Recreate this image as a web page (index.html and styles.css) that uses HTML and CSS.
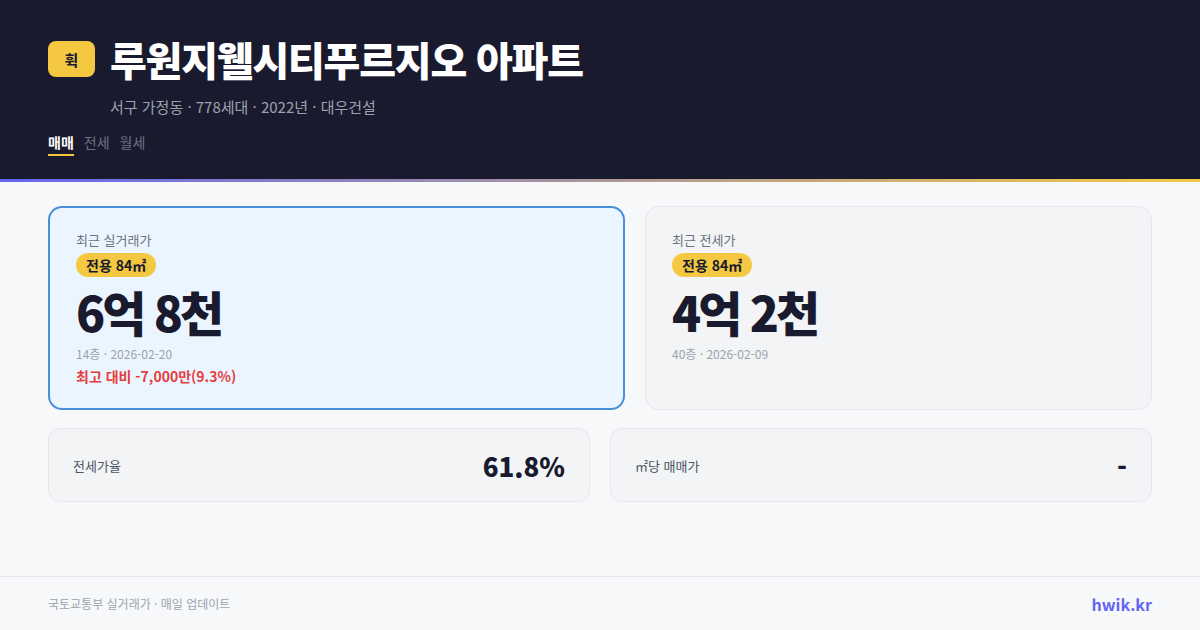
FILE: index.html
```html
<!DOCTYPE html>
<html lang="ko">
<head>
<meta charset="utf-8">
<link rel="stylesheet" href="styles.css">
</head>
<body>
<div class="page">
  <header class="header">
    <div class="title-row">
      <div class="logo">휙</div>
      <h1 class="title">루원지웰시티푸르지오 아파트</h1>
    </div>
    <div class="subtitle">서구 가정동 · 778세대 · 2022년 · 대우건설</div>
    <nav class="tabs">
      <span class="tab active">매매</span>
      <span class="tab">전세</span>
      <span class="tab">월세</span>
    </nav>
  </header>
  <div class="accent"></div>
  <main class="main">
    <div class="top-cards">
      <section class="card card-primary">
        <div class="card-label">최근 실거래가</div>
        <span class="badge">전용 84㎡</span>
        <div class="price">6억 8천</div>
        <div class="meta">14층 · 2026-02-20</div>
        <div class="diff">최고 대비 -7,000만(9.3%)</div>
      </section>
      <section class="card">
        <div class="card-label">최근 전세가</div>
        <span class="badge">전용 84㎡</span>
        <div class="price">4억 2천</div>
        <div class="meta">40층 · 2026-02-09</div>
      </section>
    </div>
    <div class="stat-cards">
      <div class="stat">
        <span class="stat-label">전세가율</span>
        <span class="stat-value">61.8%</span>
      </div>
      <div class="stat">
        <span class="stat-label">㎡당 매매가</span>
        <span class="stat-value">-</span>
      </div>
    </div>
  </main>
  <footer class="footer">
    <span class="source">국토교통부 실거래가 · 매일 업데이트</span>
    <span class="brand">hwik.kr</span>
  </footer>
</div>
</body>
</html>
```

FILE: styles.css
```css
* { box-sizing: border-box; margin: 0; padding: 0; }
html, body {
  width: 1200px;
  height: 630px;
  overflow: hidden;
}
body {
  background: #f7f8fa;
  font-family: "Noto Sans CJK KR", "Noto Sans", sans-serif;
  color: #1a1a2e;
}
.page {
  display: flex;
  flex-direction: column;
  height: 630px;
}
.header {
  background: #1a1a2e;
  padding: 35px 48px 0 48px;
  height: 179px;
}
.title-row {
  display: flex;
  align-items: center;
  gap: 15px;
}
.logo {
  width: 47px;
  height: 36px;
  border-radius: 8px;
  background: #f5c842;
  color: #1a1a2e;
  font-size: 15px;
  font-weight: 700;
  display: flex;
  align-items: center;
  justify-content: center;
}
.title {
  color: #ffffff;
  font-size: 40px;
  font-weight: 900;
  letter-spacing: -1.2px;
  line-height: 48px;
}
.subtitle {
  margin-top: 13px;
  margin-left: 62px;
  color: #9ca3af;
  font-size: 15px;
  line-height: 22px;
}
.tabs {
  display: flex;
  gap: 10px;
  margin-top: 14px;
}
.tab {
  font-size: 14px;
  line-height: 20px;
  color: #6b7280;
  padding-bottom: 2px;
}
.tab.active {
  color: #ffffff;
  font-weight: 700;
  border-bottom: 2px solid #f5c842;
}
.accent {
  height: 3px;
  background: linear-gradient(90deg, #6366f1, #f5c842);
}
.main {
  flex: 1;
  padding: 24px 48px 0 48px;
}
.top-cards {
  display: grid;
  grid-template-columns: 577fr 507fr;
  gap: 20px;
}
.card {
  height: 204px;
  background: #f2f4f6;
  border: 1px solid #e5e7eb;
  border-radius: 14px;
  padding: 23px 26px;
  display: flex;
  flex-direction: column;
  align-items: flex-start;
}
.card-primary {
  background: #ebf5ff;
  border: 2px solid #4a90d9;
  padding: 22px 26px;
}
.card-label {
  font-size: 13px;
  line-height: 19px;
  color: #6b7280;
}
.badge {
  margin-top: 4px;
  background: #f5c842;
  color: #1a1a2e;
  font-size: 14px;
  font-weight: 700;
  line-height: 24px;
  padding: 0 10px;
  border-radius: 12px;
}
.price {
  font-size: 48px;
  font-weight: 900;
  line-height: 68px;
  letter-spacing: -3px;
  color: #1a1a2e;
}
.meta {
  font-size: 12px;
  line-height: 18px;
  color: #9ca3af;
}
.diff {
  margin-top: 3px;
  font-size: 14px;
  font-weight: 700;
  line-height: 20px;
  color: #e53e3e;
}
.stat-cards {
  display: grid;
  grid-template-columns: 1fr 1fr;
  gap: 20px;
  margin-top: 18px;
}
.stat {
  height: 74px;
  background: #f2f4f6;
  border: 1px solid #e5e7eb;
  border-radius: 12px;
  padding: 0 24px;
  display: flex;
  align-items: center;
  justify-content: space-between;
}
.stat-label {
  font-size: 13px;
  color: #4b5563;
}
.stat-value {
  font-size: 26px;
  font-weight: 900;
  color: #1a1a2e;
}
.footer {
  height: 54px;
  border-top: 1px solid #e5e7eb;
  padding: 0 48px;
  display: flex;
  align-items: center;
  justify-content: space-between;
}
.source {
  font-size: 12px;
  color: #9ca3af;
}
.brand {
  font-size: 16px;
  font-weight: 700;
  color: #6366f1;
}
```
